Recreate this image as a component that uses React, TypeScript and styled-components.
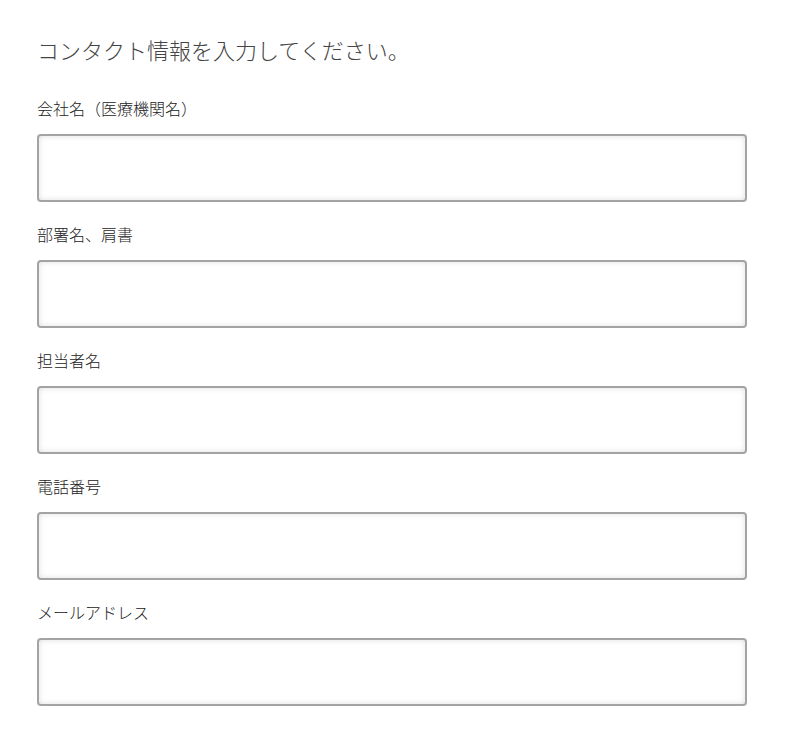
import React from "react";
import styled, { createGlobalStyle } from "styled-components";

const Global = createGlobalStyle`
  html, body { margin: 0; padding: 0; background: #fff; }
  body { font-family: "Noto Sans CJK JP", "Noto Sans", sans-serif; color: #333; }
`;

const Page = styled.div`
  padding: 35px 52px 0 37px;
  display: flex;
  flex-direction: column;
`;

const Title = styled.h2`
  margin: 0;
  font-size: 22px;
  font-weight: 300;
  line-height: 28px;
  color: #444;
`;

const Fields = styled.div`
  display: flex;
  flex-direction: column;
  gap: 21px;
  margin-top: 34px;
`;

const Field = styled.label`
  display: flex;
  flex-direction: column;
  gap: 15px;
`;

const Label = styled.span`
  font-size: 16px;
  line-height: 22px;
  font-weight: 300;
  color: #222;
`;

const Input = styled.input`
  box-sizing: border-box;
  width: 100%;
  height: 68px;
  border: 2px solid #a3a3a3;
  border-radius: 4px;
  background: #fff;
  box-shadow: inset 0 0 6px rgba(0, 0, 0, 0.12);
  outline: none;
  padding: 0 12px;
  font-size: 16px;
`;

const fields = ["会社名（医療機関名）", "部署名、肩書", "担当者名", "電話番号", "メールアドレス"];

export default function App() {
  return (
    <>
      <Global />
      <Page>
        <Title>コンタクト情報を入力してください。</Title>
        <Fields>
          {fields.map((f) => (
            <Field key={f}>
              <Label>{f}</Label>
              <Input type="text" />
            </Field>
          ))}
        </Fields>
      </Page>
    </>
  );
}
